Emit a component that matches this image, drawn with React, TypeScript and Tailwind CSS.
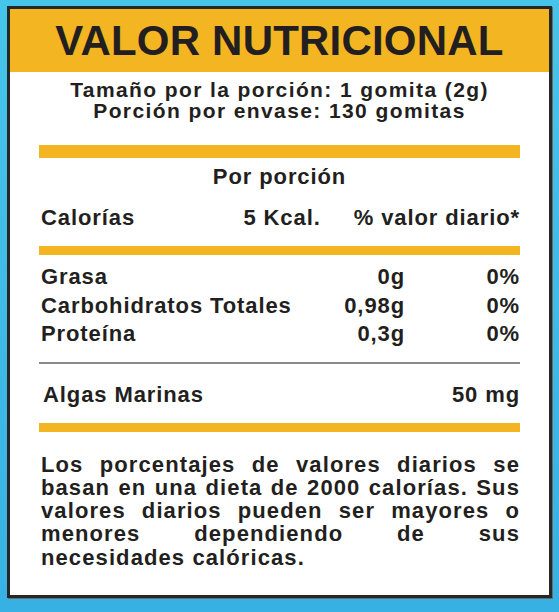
import React from "react";

const F = { fontFamily: '"Liberation Sans", Arial, sans-serif' };

export default function App() {
  return (
    <div
      className="w-[559px] h-[612px] bg-gradient-to-b from-[#46c5ea] to-[#37b1e3] pl-[7px] pr-[7px] pt-[6px] pb-[14px] text-[#231f20] font-bold"
      style={F}
    >
      <div className="h-full flex flex-col bg-white border-[3px] border-[#262626] shadow-[1px_1px_0_#6b6b6b]">
        <div className="h-[63px] bg-[#f3b522] flex items-center justify-center">
          <h1 className="text-[42px] leading-none tracking-[0.2px]">VALOR NUTRICIONAL</h1>
        </div>

        <div className="px-[29px] flex flex-col">
          <div className="mt-[7px] text-center text-[21px] leading-[21px] tracking-[1.4px]">
            <div>Tamaño por la porción: 1 gomita (2g)</div>
            <div>Porción por envase: 130 gomitas</div>
          </div>

          <div className="mt-[24px] h-[13px] bg-[#f3b522]" />

          <div className="mt-[7px] text-center text-[22px] leading-[24px] tracking-[0.9px]">Por porción</div>

          <div className="mt-[17px] flex items-center text-[22px] leading-[24px] tracking-[0.9px] pl-[2px]">
            <div className="flex-1">Calorías</div>
            <div>5 Kcal.</div>
            <div className="ml-[33px]">% valor diario*</div>
          </div>

          <div className="mt-[16px] h-[9px] bg-[#f3b522]" />

          <div className="mt-[8px] grid grid-cols-[1fr_auto_115px] text-[22px] leading-[28.5px] tracking-[0.9px] pl-[2px]">
            <div>Grasa</div>
            <div className="text-right">0g</div>
            <div className="text-right">0%</div>
            <div>Carbohidratos Totales</div>
            <div className="text-right">0,98g</div>
            <div className="text-right">0%</div>
            <div>Proteína</div>
            <div className="text-right">0,3g</div>
            <div className="text-right">0%</div>
          </div>

          <div className="mt-[13px] h-[2px] bg-[#8a8a8a]" />

          <div className="mt-[19px] flex items-center justify-between text-[22px] leading-[24px] tracking-[0.9px] pl-[4px]">
            <div>Algas Marinas</div>
            <div>50 mg</div>
          </div>

          <div className="mt-[16px] h-[9px] bg-[#f3b522]" />

          <div className="mt-[21px] text-[22px] leading-[23.3px] tracking-[1.1px] pl-[2px]">
            <div className="text-justify [text-align-last:justify]">Los porcentajes de valores diarios se</div>
            <div className="text-justify [text-align-last:justify]">basan en una dieta de 2000 calorías. Sus</div>
            <div className="text-justify [text-align-last:justify]">valores diarios pueden ser mayores o</div>
            <div className="text-justify [text-align-last:justify]">menores dependiendo de sus</div>
            <div>necesidades calóricas.</div>
          </div>
        </div>
      </div>
    </div>
  );
}
